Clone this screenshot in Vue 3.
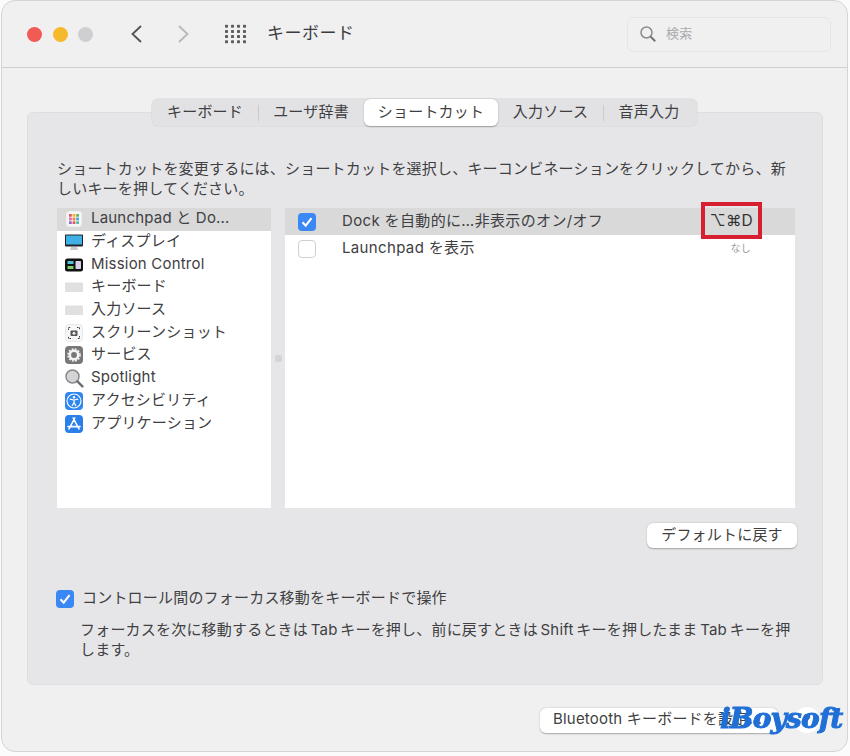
<script setup>
const tabs = [
  { label: 'キーボード', cls: 'w1' },
  { sep: true },
  { label: 'ユーザ辞書', cls: 'w2' },
  { label: 'ショートカット', cls: 'w3 active' },
  { label: '入力ソース', cls: 'w4' },
  { sep: true },
  { label: '音声入力', cls: 'w5' }
]
const services = [
  { icon: 'launch', label: 'Launchpad と Do...', selected: true },
  { icon: 'display', label: 'ディスプレイ' },
  { icon: 'mission', label: 'Mission Control' },
  { icon: 'kbd', label: 'キーボード' },
  { icon: 'kbd', label: '入力ソース' },
  { icon: 'shot', label: 'スクリーンショット' },
  { icon: 'gear', label: 'サービス' },
  { icon: 'spot', label: 'Spotlight' },
  { icon: 'access', label: 'アクセシビリティ' },
  { icon: 'store', label: 'アプリケーション' }
]
const dots = [0, 1, 2, 3].flatMap(x => [0, 1, 2, 3].map(y => ({ x: x * 6 + 2.5, y: y * 5.2 + 2.2 })))
const launchColors = ['#e8574f', '#f0b33c', '#5cb85c', '#e86aa8', '#f08a3c', '#49a6e8', '#8a6ad8', '#e8574f', '#4fc0a8']
</script>

<template>
  <div class="window">
    <header class="toolbar">
      <div class="lights">
        <span class="light red"></span>
        <span class="light yellow"></span>
        <span class="light grey"></span>
      </div>
      <svg class="chev first" width="14" height="20" viewBox="0 0 14 20"><path d="M12 2 3.5 10l8.5 8" fill="none" stroke="#525254" stroke-width="1.8" /></svg>
      <svg class="chev second" width="14" height="20" viewBox="0 0 14 20"><path d="M2 2l8.5 8L2 18" fill="none" stroke="#b8b8ba" stroke-width="1.8" /></svg>
      <svg class="grid" width="24" height="20" viewBox="0 0 24 20">
        <rect v-for="(d, i) in dots" :key="i" :x="d.x - 1.5" :y="d.y - 1.5" width="3" height="3" rx="0.7" fill="#5e5e60" />
      </svg>
      <h1 class="title">キーボード</h1>
      <div class="search">
        <svg width="18" height="18" viewBox="0 0 18 18"><circle cx="7.5" cy="7.5" r="5.5" fill="none" stroke="#8c8c8e" stroke-width="1.5" /><path d="m11.6 11.6 4.6 4.6" stroke="#707072" stroke-width="2" /></svg>
        <span class="search-text">検索</span>
      </div>
    </header>

    <main class="body">
      <nav class="tabs">
        <template v-for="(t, i) in tabs" :key="i">
          <span v-if="t.sep" class="sep"></span>
          <span v-else class="tab" :class="t.cls">{{ t.label }}</span>
        </template>
      </nav>
      <section class="panel">
        <p class="intro">ショートカットを変更するには、ショートカットを選択し、キーコンビネーションをクリックしてから、新<br />しいキーを押してください。</p>
        <div class="lists">
          <ul class="services">
            <li v-for="s in services" :key="s.label" class="svc" :class="{ selected: s.selected }">
              <svg class="ic" width="20" height="20" viewBox="0 0 20 20">
                <template v-if="s.icon === 'launch'">
                  <rect x="2" y="2" width="16" height="16" rx="3.5" fill="#f6f6f6" stroke="#dcdcdc" stroke-width=".6" />
                  <rect v-for="(c, i) in launchColors" :key="i" :x="5 + (i % 3) * 3.6" :y="5 + Math.floor(i / 3) * 3.6" width="2.8" height="2.8" rx=".6" :fill="c" />
                </template>
                <template v-else-if="s.icon === 'display'">
                  <rect x="1" y="2.5" width="18" height="12" rx="1" fill="#1f2327" />
                  <rect x="2" y="3.5" width="16" height="9" fill="#3fb0e6" />
                  <path d="M7 15h6l1 3H6z" fill="#c9c9cb" />
                </template>
                <template v-else-if="s.icon === 'mission'">
                  <rect x="1" y="3.5" width="18" height="13" rx="2.5" fill="#111" />
                  <rect x="3.5" y="6" width="6" height="3" rx=".6" fill="#4fc3d8" />
                  <rect x="3.5" y="11" width="6" height="3" rx=".6" fill="#7fd06a" />
                  <rect x="11.5" y="6" width="5.5" height="8" rx=".8" fill="#d8d0e8" />
                </template>
                <template v-else-if="s.icon === 'kbd'">
                  <rect x="1" y="5.5" width="18" height="9.5" rx="1" fill="#e0e0e1" />
                </template>
                <template v-else-if="s.icon === 'shot'">
                  <rect x="1.5" y="1.5" width="17" height="17" rx="3.5" fill="#f8f8f8" stroke="#dcdcdc" stroke-width=".6" />
                  <path d="M4.5 7V4.5H7M13 4.5h2.5V7M15.5 13v2.5H13M7 15.5H4.5V13" fill="none" stroke="#444" stroke-width="1" stroke-dasharray="1.6 .8" />
                  <rect x="6.5" y="7.5" width="7" height="5.5" rx="1" fill="#555" />
                  <circle cx="10" cy="10.2" r="1.5" fill="#eee" />
                </template>
                <template v-else-if="s.icon === 'gear'">
                  <rect x="1" y="1" width="18" height="18" rx="4" fill="#77777a" />
                  <circle cx="10" cy="10" r="4.2" fill="none" stroke="#f2f2f2" stroke-width="2.6" />
                  <circle cx="10" cy="10" r="6" fill="none" stroke="#f2f2f2" stroke-width="1.6" stroke-dasharray="1.8 1.35" />
                </template>
                <template v-else-if="s.icon === 'spot'">
                  <circle cx="8.5" cy="8.5" r="6.5" fill="#d4d4d6" stroke="#8a8a8c" stroke-width="1.5" />
                  <path d="m13.4 13.4 5 5" stroke="#6e6e70" stroke-width="2.4" stroke-linecap="round" />
                </template>
                <template v-else-if="s.icon === 'access'">
                  <rect x="1" y="1" width="18" height="18" rx="4" fill="#2f86ee" />
                  <circle cx="10" cy="10" r="7" fill="none" stroke="#fff" stroke-width="1.1" />
                  <circle cx="10" cy="6.2" r="1.2" fill="#fff" />
                  <path d="M5.8 8.2 10 9l4.2-.8M10 9v2.6l-2 3.4M10 11.6l2 3.4" fill="none" stroke="#fff" stroke-width="1.2" />
                </template>
                <template v-else>
                  <rect x="1" y="1" width="18" height="18" rx="4" fill="#2a7fe8" />
                  <path d="M10.8 4 5 15M9.2 4 15 15M4 12.6h12" fill="none" stroke="#fff" stroke-width="1.6" stroke-linecap="round" />
                </template>
              </svg>
              <span class="lift">{{ s.label }}</span>
            </li>
          </ul>
          <div class="splitter"><span class="handle"></span></div>
          <div class="shortcuts">
            <div class="shortcut selected">
              <span class="box checked">
                <svg width="18" height="18" viewBox="0 0 18 18"><path d="m4.5 9.2 3.2 3.4 5.8-7.4" fill="none" stroke="#fff" stroke-width="2.1" /></svg>
              </span>
              <span class="name lift">Dock を自動的に…非表示のオン/オフ</span>
              <span class="keys lift">⌥⌘D</span>
              <span class="callout"></span>
            </div>
            <div class="shortcut second-row">
              <span class="box"></span>
              <span class="name lift">Launchpad を表示</span>
              <span class="none lift">なし</span>
            </div>
          </div>
        </div>
        <div class="default-row"><button class="btn default"><span class="lift">デフォルトに戻す</span></button></div>
        <div class="focus-row">
          <span class="box checked">
            <svg width="18" height="18" viewBox="0 0 18 18"><path d="m4.5 9.2 3.2 3.4 5.8-7.4" fill="none" stroke="#fff" stroke-width="2.1" /></svg>
          </span>
          <span class="lift">コントロール間のフォーカス移動をキーボードで操作</span>
        </div>
        <p class="hint">フォーカスを次に移動するときは Tab キーを押し、前に戻すときは Shift キーを押したまま Tab キーを押<br />します。</p>
      </section>
      <footer class="actions">
        <button class="btn bt"><span class="lift">Bluetooth キーボードを設定...</span></button>
        <span class="help">?</span>
      </footer>
    </main>
    <div class="mark">iBoysoft</div>
  </div>
</template>

<style>
html, body { background: #fbfbfb; }
</style>

<style scoped>
.window {
  position: relative;
  box-sizing: border-box;
  width: 847px;
  height: 752px;
  margin-left: 1px;
  background: #f0f0f1;
  border: 1px solid #d4d4d5;
  border-radius: 14px;
  overflow: hidden;
  color: #404042;
  font-family: Inter, "Noto Sans CJK JP", sans-serif;
  font-size: 15px;
  line-height: 20px;
  letter-spacing: .2px;
  filter: blur(0.45px);
}
.lift { display: block; margin-top: -2px; }
.toolbar {
  position: relative;
  display: flex;
  align-items: center;
  box-sizing: border-box;
  height: 67px;
  padding: 0 16px 0 25px;
  border-bottom: 1px solid #cfcfd1;
}
.lights { display: flex; gap: 10.5px; }
.light { width: 15px; height: 15px; border-radius: 50%; }
.red { background: #f25a55; }
.yellow { background: #f5b92d; }
.grey { background: #cfcfd1; }
.chev { flex: none; }
.first { margin-left: 36px; }
.second { margin-left: 34px; }
.grid { margin-left: 33px; flex: none; }
.title {
  margin: -3px 0 0 19px;
  font-size: 17px;
  font-weight: 400;
  letter-spacing: .5px;
  color: #3c3c3e;
}
.search {
  display: flex;
  align-items: center;
  gap: 9px;
  box-sizing: border-box;
  width: 204px;
  height: 35px;
  margin-left: auto;
  padding-left: 11px;
  border: 1px solid #e5e5e6;
  border-radius: 6px;
  font-size: 13px;
  color: #ababad;
}
.search-text { margin-top: -2px; }
.body { padding: 31px 25px 0 25px; }
.tabs {
  position: relative;
  z-index: 1;
  display: flex;
  align-items: center;
  box-sizing: border-box;
  width: 545px;
  height: 27px;
  margin: 0 auto -14px;
  background: #e2e2e4;
  border-radius: 6px;
  box-shadow: 0 0 0 .5px #d4d4d6;
  font-size: 15px;
}
.tab {
  display: flex;
  align-items: center;
  justify-content: center;
  height: 100%;
  padding-bottom: 2px;
  box-sizing: border-box;
  color: #3f3f41;
}
.w1 { width: 106px; }
.w2 { width: 106px; }
.w3 { width: 134px; }
.w4 { width: 105px; }
.w5 { width: 92px; }
.active { background: #fff; border-radius: 6px; box-shadow: 0 .5px 1.5px rgba(0,0,0,.3); }
.sep { width: 1px; height: 16px; margin-right: -1px; background: #cbcbcd; }
.panel {
  box-sizing: border-box;
  width: 796px;
  height: 573px;
  padding: 46px 26px 0 29px;
  background: #e6e6e8;
  border: 1px solid #dedee0;
  border-radius: 6px;
}
.intro, .hint {
  margin: 0;
  white-space: nowrap;
}
.lists { display: flex; height: 300px; margin-top: 9px; }
.services {
  width: 214px;
  margin: 0;
  padding: 0;
  list-style: none;
  background: #fff;
}
.svc {
  display: flex;
  align-items: center;
  height: 22.7px;
  padding-left: 7px;
  gap: 7px;
  white-space: nowrap;
}
.svc.selected { background: #d9d9da; }
.ic { flex: none; }
.splitter {
  display: flex;
  align-items: center;
  justify-content: center;
  width: 14px;
}
.handle { width: 7px; height: 7px; background: #d4d4d6; border-radius: 2px; }
.shortcuts { flex: 1; margin-right: 1px; background: #fff; }
.shortcut {
  position: relative;
  display: flex;
  align-items: center;
  height: 27px;
  padding: 0 42px 0 13px;
}
.shortcut.selected { background: #d9d9da; }
.second-row .lift { margin-top: -1px; }
.box {
  flex: none;
  box-sizing: border-box;
  width: 18px;
  height: 18px;
  background: #fff;
  border: 1px solid #d0d0d2;
  border-radius: 4px;
}
.box.checked {
  display: flex;
  background: #3a87f6;
  border: 0;
}
.name { margin-left: 26px; letter-spacing: .35px; }
.keys { margin-left: auto; font-size: 15.5px; color: #333; }
.none { margin-left: auto; margin-right: 2px; font-size: 10px; color: #9a9a9c; }
.callout {
  position: absolute;
  left: 416px;
  top: -6px;
  box-sizing: border-box;
  width: 61px;
  height: 37px;
  border: 4px solid #d61f30;
}
.default-row { display: flex; justify-content: flex-end; margin-top: 15px; margin-right: -1px; }
.btn {
  height: 25px;
  padding: 0;
  background: #fff;
  border: 0;
  border-radius: 6px;
  box-shadow: 0 .5px 1.5px rgba(0,0,0,.3);
  font: inherit;
  letter-spacing: inherit;
  color: #3f3f41;
}
.default { width: 150px; }
.focus-row {
  display: flex;
  align-items: center;
  gap: 8px;
  margin-top: 42px;
  margin-left: -1px;
}
.hint { margin: 12px 0 0 23px; word-spacing: -1.7px; }
.actions {
  display: flex;
  align-items: center;
  margin-top: 22px;
  padding-left: 513px;
}
.bt { width: 238px; text-align: left; padding-left: 13px; white-space: nowrap; }
.help {
  display: flex;
  align-items: center;
  justify-content: center;
  width: 26px;
  height: 26px;
  margin-left: 16px;
  background: #fff;
  border-radius: 50%;
  color: #3f3f41;
}
.mark {
  position: absolute;
  left: 718px;
  top: 700px;
  font-family: "DejaVu Serif", serif;
  font-weight: 700;
  font-style: italic;
  font-size: 28px;
  line-height: 36px;
  letter-spacing: -.8px;
  color: #1f6fd6;
  -webkit-text-stroke: 1px #1f6fd6;
}
</style>
